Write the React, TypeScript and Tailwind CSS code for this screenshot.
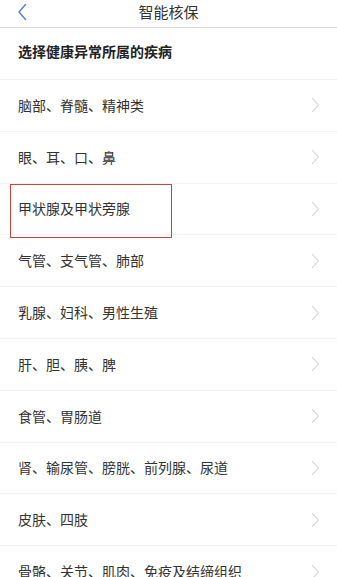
import React from "react";

const items = [
  "脑部、脊髓、精神类",
  "眼、耳、口、鼻",
  "甲状腺及甲状旁腺",
  "气管、支气管、肺部",
  "乳腺、妇科、男性生殖",
  "肝、胆、胰、脾",
  "食管、胃肠道",
  "肾、输尿管、膀胱、前列腺、尿道",
  "皮肤、四肢",
  "骨骼、关节、肌肉、免疫及结缔组织",
];

function Chevron() {
  return (
    <svg width="9" height="16" viewBox="0 0 9 16" fill="none">
      <path d="M1.5 1.5 L7.5 8 L1.5 14.5" stroke="#cfcfcf" strokeWidth="1.1" strokeLinecap="round" strokeLinejoin="round" />
    </svg>
  );
}

export default function App() {
  return (
    <div
      className="w-[337px] h-[577px] overflow-hidden bg-white text-[#333]"
      style={{ fontFamily: '"Noto Sans CJK SC", "Noto Sans", sans-serif' }}
    >
      <div className="relative h-[28px] border-b border-[#dcdcdc] flex items-center justify-center">
        <div className="absolute left-[17px] top-[3px]">
          <svg width="10" height="18" viewBox="0 0 10 18" fill="none">
            <path d="M8.5 1.5 L2 9 L8.5 16.5" stroke="#5a7fd6" strokeWidth="1.5" strokeLinecap="round" strokeLinejoin="round" />
          </svg>
        </div>
        <span className="text-[15px] text-[#333] leading-none -mt-[5px]">智能核保</span>
      </div>
      <div className="h-[52px] flex items-center pl-[18px] pb-[5px] border-b border-[#f2f2f2]">
        <span className="text-[14px] font-bold text-[#222]">选择健康异常所属的疾病</span>
      </div>
      <div className="flex flex-col">
        {items.map((t, i) => (
          <div
            key={i}
            className="relative h-[51.8px] shrink-0 flex items-center justify-between pl-[18px] pr-[17px] border-b border-[#f3f3f3]"
          >
            <span className="text-[14px] text-[#333]">{t}</span>
            <Chevron />
            {i === 2 && (
              <div className="absolute left-[10px] top-[0px] w-[162px] h-[54px] border-[1.5px] border-[#c9443f] pointer-events-none" />
            )}
          </div>
        ))}
      </div>
    </div>
  );
}
